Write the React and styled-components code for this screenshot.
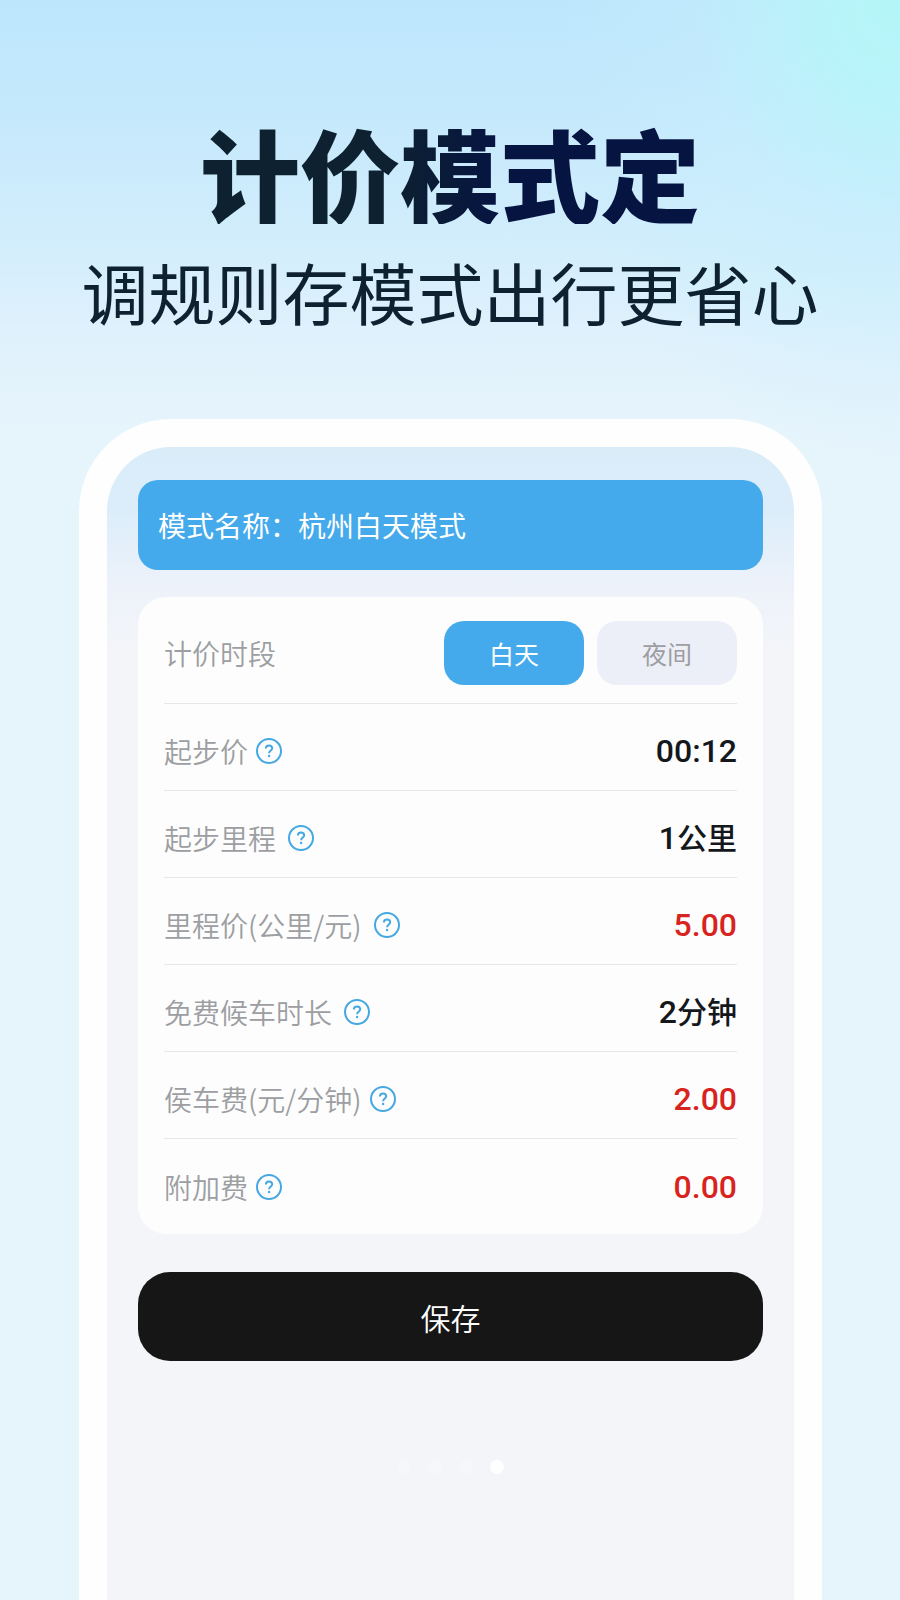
import React, { useState } from "react";
import styled, { createGlobalStyle } from "styled-components";

const GlobalStyle = createGlobalStyle`
  * {
    box-sizing: border-box;
  }
  body {
    margin: 0;
    font-family: "Noto Sans CJK SC", sans-serif;
  }
  button, input {
    font: inherit;
    border: 0;
    padding: 0;
  }
`;

const Page = styled.div`
  display: flex;
  flex-direction: column;
  min-height: 100vh;
  background:
    radial-gradient(ellipse 200px 220px at 100% 0, #b3f6f8 0%, #b3f6f8b0 40%, #b3f6f800 100%),
    radial-gradient(ellipse 340px 400px at 100% 60px, #c6effd 0%, #c6effd00 100%),
    linear-gradient(180deg, #bde6fc 0, #c3e8fc 90px, #d1edfc 230px, #e1f2fc 350px, #e6f4fc 430px, #e6f4fc 100%);
`;

const Hero = styled.header`
  display: flex;
  flex-direction: column;
  align-items: center;
  padding-top: 120px;
  text-align: center;
`;

const Title = styled.h1`
  margin: 0;
  font-size: 100px;
  font-weight: 900;
  line-height: 104px;
  color: transparent;
  background: linear-gradient(90deg, #0d2130 0%, #0d2130 38%, #061442 60%, #061442 100%);
  -webkit-background-clip: text;
  background-clip: text;
`;

const Subtitle = styled.p`
  margin: 17px 0 0;
  font-size: 67px;
  line-height: 100px;
  color: #0d2130;
`;

const Phone = styled.main`
  flex: 1;
  display: flex;
  margin: 78px 78px 0 79px;
  padding: 28px 28px 0;
  border-radius: 92px 92px 0 0;
  background: #fefefe;
`;

const Screen = styled.form`
  flex: 1;
  min-width: 0;
  padding: 33px 31px 0;
  border-radius: 64px 64px 0 0;
  background: linear-gradient(180deg, #d9edf9 0, #dbedfa 60px, #edf2fa 140px, #f3f5f9 200px);
`;

const NameBar = styled.label`
  display: flex;
  align-items: center;
  height: 90px;
  padding: 0 20px;
  border-radius: 20px;
  background: #45aaec;
  color: #fff;
  font-size: 28px;
  white-space: nowrap;
`;

const NameInput = styled.input`
  flex: 1;
  min-width: 0;
  background: none;
  color: inherit;
  outline: none;
`;

const Card = styled.section`
  margin-top: 27px;
  padding: 0 26px;
  border-radius: 28px;
  background: #fdfdfd;
`;

const Row = styled.div`
  display: flex;
  align-items: center;
  justify-content: space-between;
  height: 87px;
  padding-top: 8px;
  border-bottom: 1px solid #e6e7e9;

  &:last-child {
    height: 95px;
    padding-top: 0;
    border-bottom: 0;
  }
`;

const PeriodRow = styled(Row)`
  height: 107px;
  padding-top: 6px;
`;

const Label = styled.div`
  display: flex;
  align-items: center;
  gap: ${(props) => props.$gap || 8}px;
  color: #9c9ea2;
  font-size: 28px;
  font-weight: 350;
  line-height: 40px;
`;

const Value = styled.output`
  color: ${(props) => (props.$red ? "#d82420" : "#14171b")};
  font-family: Roboto, "Noto Sans CJK SC", sans-serif;
  font-size: 32px;
  font-weight: 500;
  line-height: 40px;
`;

const Unit = styled.span`
  font-size: 30px;
`;

const HelpButton = styled.button`
  display: flex;
  background: none;
  color: #46a8e2;
  cursor: pointer;
`;

const Periods = styled.div`
  display: flex;
  gap: 13px;
`;

const PeriodButton = styled.button`
  width: 140px;
  height: 64px;
  border-radius: 20px;
  background: ${(props) => (props.$active ? "#45aaec" : "#eceff7")};
  color: ${(props) => (props.$active ? "#fff" : "#9c9ea2")};
  font-size: 25px;
  cursor: pointer;
`;

const SaveButton = styled.button`
  display: block;
  width: 100%;
  height: 89px;
  margin-top: 38px;
  border-radius: 32px;
  background: #161616;
  color: #fff;
  font-size: 30px;
  font-weight: 350;
  cursor: pointer;
`;

const Dots = styled.div`
  display: flex;
  justify-content: center;
  gap: 17px;
  margin-top: 99px;
`;

const Dot = styled.span`
  width: 14px;
  height: 14px;
  border-radius: 50%;
  background: ${(props) => (props.$active ? "#fff" : "#f5f7fa")};
`;

const rows = [
  { label: "起步价", value: "00:12" },
  { label: "起步里程", value: "1", unit: "公里", gap: 12 },
  { label: "里程价(公里/元)", value: "5.00", gap: 12, red: true },
  { label: "免费候车时长", value: "2", unit: "分钟", gap: 12 },
  { label: "侯车费(元/分钟)", value: "2.00", red: true },
  { label: "附加费", value: "0.00", red: true },
];

const HelpIcon = () => (
  <svg width="26" height="26" viewBox="0 0 26 26" fill="none" stroke="currentColor" strokeWidth="2" aria-hidden="true">
    <circle cx="13" cy="13" r="12" />
    <path d="M9.9 10.4C9.9 8.6 11.2 7.4 13 7.4s3.2 1.1 3.2 2.8c0 2.2-3.1 2.4-3.1 5.1" />
    <circle cx="13.1" cy="18" r="1.2" fill="currentColor" stroke="none" />
  </svg>
);

const App = () => {
  const [name, setName] = useState("杭州白天模式");
  const [period, setPeriod] = useState("白天");

  return (
    <Page lang="zh-CN">
      <GlobalStyle />
      <Hero>
        <Title>计价模式定</Title>
        <Subtitle>调规则存模式出行更省心</Subtitle>
      </Hero>
      <Phone>
        <Screen onSubmit={(e) => e.preventDefault()}>
          <NameBar>
            模式名称：
            <NameInput value={name} onChange={(e) => setName(e.target.value)} />
          </NameBar>
          <Card>
            <PeriodRow>
              <Label>计价时段</Label>
              <Periods>
                {["白天", "夜间"].map((item) => (
                  <PeriodButton
                    key={item}
                    type="button"
                    $active={item === period}
                    aria-pressed={item === period}
                    onClick={() => setPeriod(item)}
                  >
                    {item}
                  </PeriodButton>
                ))}
              </Periods>
            </PeriodRow>
            {rows.map((row) => (
              <Row key={row.label}>
                <Label $gap={row.gap}>
                  {row.label}
                  <HelpButton type="button" aria-label={row.label}>
                    <HelpIcon />
                  </HelpButton>
                </Label>
                <Value $red={row.red}>
                  {row.value}
                  {row.unit && <Unit>{row.unit}</Unit>}
                </Value>
              </Row>
            ))}
          </Card>
          <SaveButton type="submit">保存</SaveButton>
          <Dots>
            <Dot />
            <Dot />
            <Dot />
            <Dot $active />
          </Dots>
        </Screen>
      </Phone>
    </Page>
  );
};

export default App;
